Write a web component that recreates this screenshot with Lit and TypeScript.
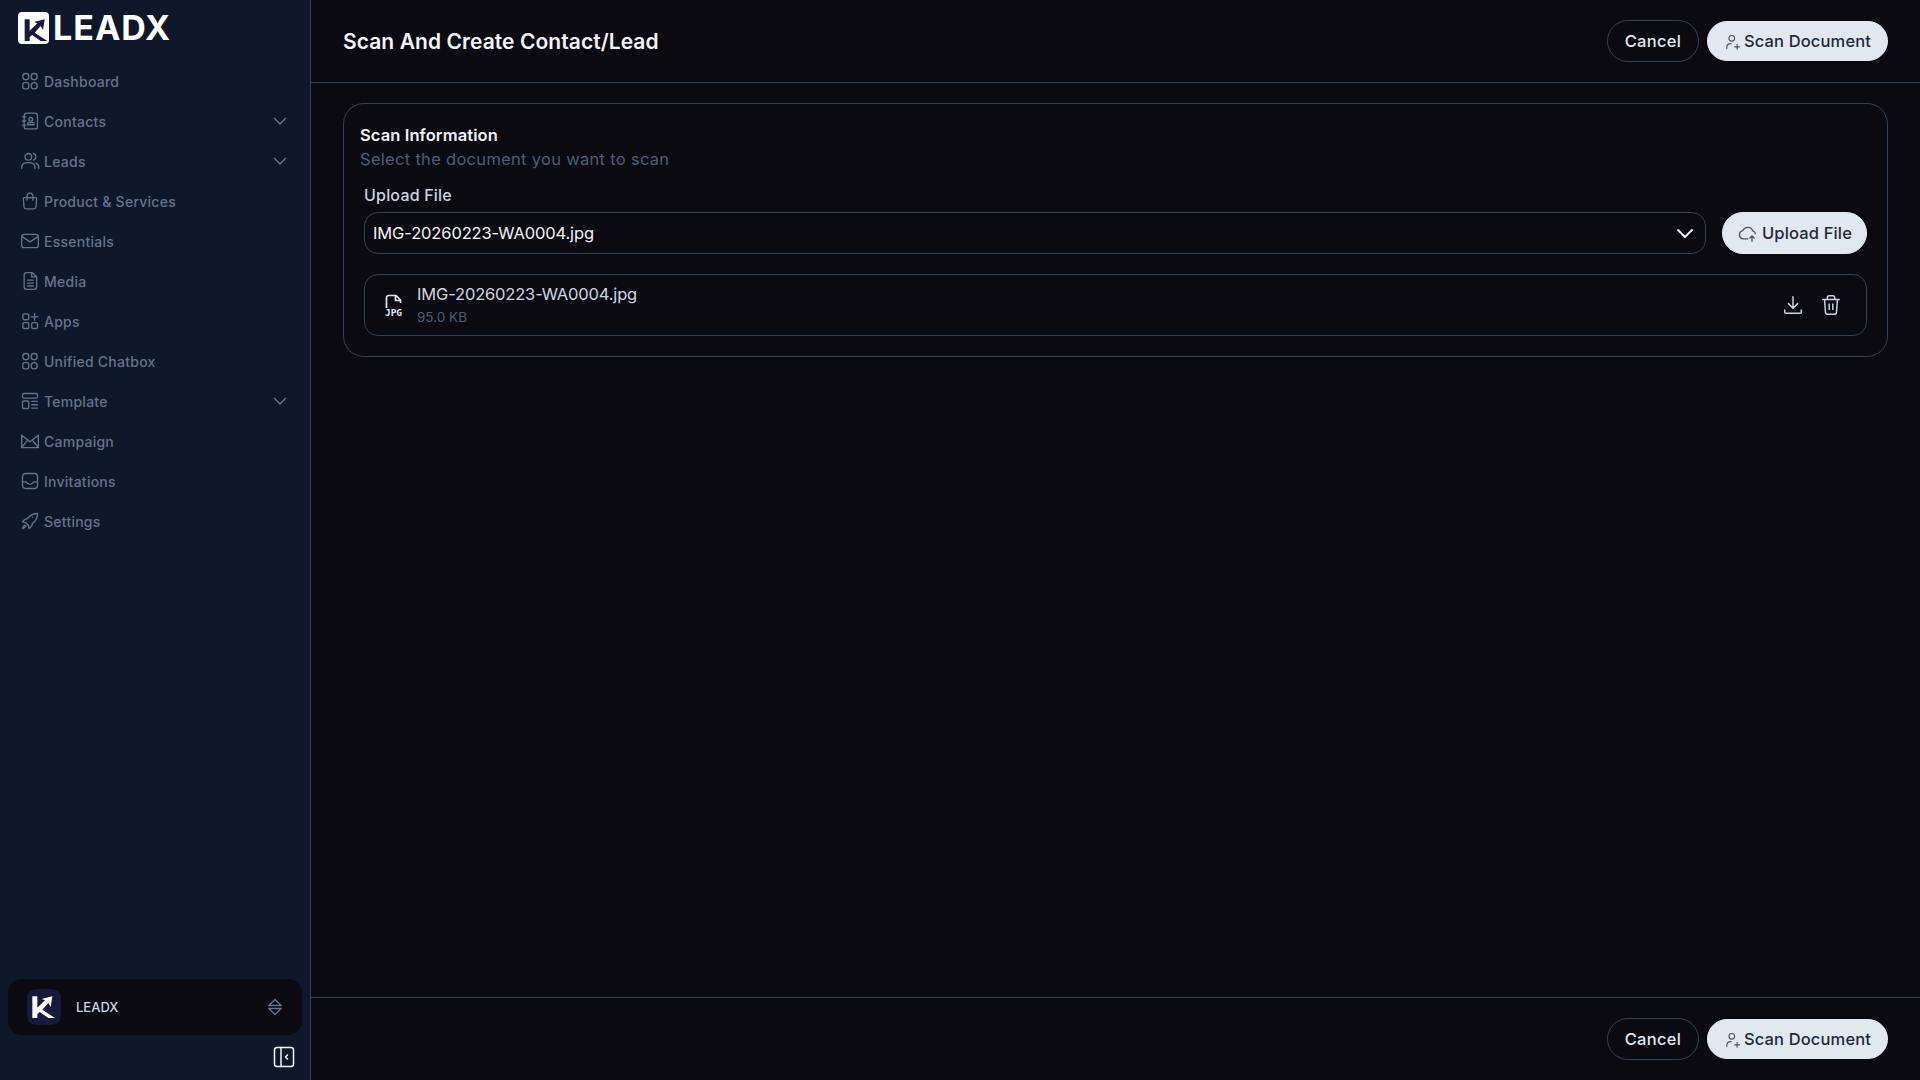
import { LitElement, html, css, svg } from "lit";
import { customElement } from "lit/decorators.js";

const ic = (body: unknown, size = 20, vb = "0 0 24 24") =>
  html`<svg width=${size} height=${size} viewBox=${vb} fill="none" stroke="currentColor" stroke-width="1.6" stroke-linecap="round" stroke-linejoin="round">${body}</svg>`;

const kPath = "M40 38H55V72L78 50L68 46L100 38L95 70L88 58L70 78L108 103H88L62 85L55 92V103H40Z";

const dash = svg`<rect x="3.500" y="3" width="7" height="7.500" rx="3.200"/><rect x="13.500" y="3" width="7" height="7.500" rx="3.200"/><rect x="3.500" y="14" width="7" height="7.500" rx="2"/><rect x="13.500" y="14" width="7" height="7.500" rx="3.200"/>`;
const icons: Record<string, unknown> = {
  dash,
  contacts: svg`<rect x="5" y="2.500" width="16" height="19" rx="3"/><circle cx="13" cy="10" r="2.200"/><path d="M9 16.500h8M9 14.500c1-1 7-1 8 0M3 7h4M3 12h4M3 17h4"/>`,
  leads: svg`<circle cx="10" cy="7" r="4"/><path d="M2 21v-1.500C2 16 5 14 10 14s8 2 8 5.500V21M16 3c2 .5 3 2.200 3 4s-1 3.500-3 4M19 14.500c2 .8 3.500 2.500 3.500 5V21"/>`,
  bag: svg`<path d="M5 8h14a1 1 0 0 1 1 1l-.8 10a3 3 0 0 1-3 2.500H7.800a3 3 0 0 1-3-2.500L4 9a1 1 0 0 1 1-1zM8.500 11V6a3.500 3.500 0 0 1 7 0v5"/>`,
  mail: svg`<rect x="2" y="4" width="20" height="16" rx="3"/><path d="M3 7l9 6 9-6"/>`,
  media: svg`<path d="M5 5a3 3 0 0 1 3-3h7l5 5v12a3 3 0 0 1-3 3H8a3 3 0 0 1-3-3zM9 11h7M9 14.500h7M9 18h7M14 2.500V7h5"/>`,
  apps: svg`<rect x="3.500" y="3.500" width="7" height="7" rx="1.500"/><rect x="3.500" y="14" width="7" height="7" rx="1.500"/><rect x="14" y="14" width="7" height="7" rx="1.500"/><path d="M17.500 3v8M13.500 7h8"/>`,
  template: svg`<rect x="3" y="3" width="18" height="5.500" rx="1.500"/><rect x="3" y="12" width="7.500" height="9" rx="1.500"/><path d="M14 12.500h7M14 16.500h7M14 20.500h7"/>`,
  campaign: svg`<path d="M2 5l10 8 10-8v15H2zM2 20l7-9M22 20l-7-9" stroke-linecap="square"/>`,
  invite: svg`<rect x="3" y="3" width="18" height="18" rx="3.500"/><path d="M3 13h4.500c1 2 2.500 3 4.500 3s3.500-1 4.500-3H21"/>`,
  rocket: svg`<path d="M21 3c-5 0-9 2-12 6l-3 1-3 3 4 1 3 3 1 4 3-3 1-3c4-3 6-7 6-12zM15 7.500h.01M6 17c-1.500.5-2.500 2-3 4 2-.5 3.500-1.500 4-3"/>`,
};

const nav: [string, string, boolean][] = [
  ["Dashboard", "dash", false],
  ["Contacts", "contacts", true],
  ["Leads", "leads", true],
  ["Product & Services", "bag", false],
  ["Essentials", "mail", false],
  ["Media", "media", false],
  ["Apps", "apps", false],
  ["Unified Chatbox", "dash", false],
  ["Template", "template", true],
  ["Campaign", "campaign", false],
  ["Invitations", "invite", false],
  ["Settings", "rocket", false],
];

const chevron = (size = 20) => ic(svg`<path d="M5.500 9l6.500 6.500L18.500 9"/>`, size);
const userPlus = ic(svg`<circle cx="11" cy="7.500" r="4"/><path d="M4 22v-2c0-3 2.500-5 6-5M15 19.500h7M18.500 16v7"/>`, 17);

@customElement("app-root")
export class AppRoot extends LitElement {
  static styles = css`
    :host { display: block; width: 1920px; height: 1080px; font-family: Inter, "Liberation Sans", sans-serif; color: #e2e8f0; background: #0b0a10; }
    * { box-sizing: border-box; }
    .shell { display: flex; height: 100%; }
    .side { width: 311px; flex: none; background: #0f172a; border-right: 1px solid #334155; display: flex; flex-direction: column; padding: 0 8px 12px; }
    .brand { display: flex; align-items: center; gap: 4px; height: 56px; padding: 0 0 1px 10px; color: #fff; }
    .brand svg { flex: none; }
    .brand span { font: 700 34px/1 Inter, sans-serif; letter-spacing: 1px; }
    nav { flex: 1; display: flex; flex-direction: column; padding-top: 5px; }
    .item { height: 40px; display: flex; align-items: center; gap: 4px; padding: 0 12px 0 12px; color: #64748b; font-size: 14px; font-weight: 500; letter-spacing: .25px; }
    .item svg { flex: none; }
    .item .label { flex: 1; }
    .ws { height: 56px; border-radius: 14px; background: #0b0a10; display: flex; align-items: center; padding: 0 20px 0 19px; gap: 15px; color: #cbd5e1; font-size: 13px; font-weight: 500; }
    .ws .label { flex: 1; }
    .ws .sort { color: #64748b; flex: none; }
    .wslogo { width: 34px; height: 36px; border-radius: 9px; background: #171a3a; display: grid; place-items: center; flex: none; }
    .collapse { align-self: flex-end; margin: 11px 7px 0 0; color: #f1f5f9; height: 22px; }
    main { flex: 1; min-width: 0; display: flex; flex-direction: column; }
    header { height: 83px; flex: none; border-bottom: 1px solid #334155; display: flex; align-items: center; padding: 0 32px; }
    header h1 { flex: 1; margin: 0; font-size: 21px; font-weight: 600; letter-spacing: .07px; color: #f1f5f9; }
    .content { flex: 1; padding: 20px 32px; }
    footer { height: 83px; flex: none; border-top: 1px solid #334155; display: flex; align-items: center; justify-content: flex-end; padding: 0 32px; }
    .btns { display: flex; gap: 8px; align-items: center; }
    .btn { height: 42px; width: 92px; border-radius: 21px; display: inline-flex; align-items: center; justify-content: center; font-size: 16.500px; font-weight: 500; letter-spacing: .3px; border: 1px solid #334155; color: #e2e8f0; }
    .btn.primary { background: #e2e8f0; border-color: #e2e8f0; color: #1e293b; gap: 3px; height: 40px; width: 181px; letter-spacing: .15px; }
    .btn.primary svg { color: #475569; flex: none; }
    .card { border: 1px solid #334155; border-radius: 21px; padding: 20px 16px; height: 254px; }
    .title { font-size: 16.500px; font-weight: 600; line-height: 22px; letter-spacing: .1px; color: #f1f5f9; }
    .sub { font-size: 16.500px; line-height: 26px; letter-spacing: .3px; color: #4f5d74; }
    .field { padding: 0 4px; }
    .lab { font-size: 16px; font-weight: 500; letter-spacing: .2px; color: #cbd5e1; line-height: 22px; margin-top: 12px; }
    .row { display: flex; gap: 16px; margin-top: 6px; }
    .select { flex: 1; height: 42px; border: 1px solid #334155; border-radius: 14px; display: flex; align-items: center; justify-content: space-between; padding: 0 8px 0 8px; font-size: 16.500px; letter-spacing: -.13px; color: #f1f5f9; }
    .btn.up { width: 145px; height: 42px; gap: 5px; }
    .file { margin-top: 20px; height: 62px; border: 1px solid #334155; border-radius: 14px; display: flex; align-items: center; padding: 0 24px 0 20px; gap: 15px; }
    .file .info { flex: 1; padding-bottom: 2px; }
    .fname { font-size: 16.500px; line-height: 22px; letter-spacing: -.17px; color: #cbd5e1; }
    .fsize { font-size: 13.500px; line-height: 18px; color: #4f5d74; margin-top: 3px; }
    .acts { display: flex; gap: 16px; color: #cbd5e1; }
    .jpg { width: 17px; height: 22px; display: flex; flex-direction: column; align-items: center; flex: none; }
    .jpg svg { flex: none; }
    .jpgt { font: 700 9.500px/9px "DejaVu Sans Mono", monospace; color: #e2e8f0; }
  `;

  actions() {
    return html`<div class="btns">
      <div class="btn">Cancel</div>
      <div class="btn primary">${userPlus}Scan Document</div>
    </div>`;
  }

  render() {
    return html`<div class="shell">
      <aside class="side">
        <div class="brand">
          <svg width="31" height="32" viewBox="22 20 93 96"><rect x="22" y="20" width="93" height="96" rx="12" fill="#fff"/><path d=${kPath} fill="#171a3a" transform="translate(2 4)"/></svg>
          <span>LEADX</span>
        </div>
        <nav>
          ${nav.map(([t, i, c]) => html`<div class="item">${ic(icons[i], 20)}<span class="label">${t}</span>${c ? chevron(20) : ""}</div>`)}
        </nav>
        <div class="ws">
          <div class="wslogo"><svg width="34" height="36" viewBox="24 16 102 108"><path d=${kPath} fill="#fff"/></svg></div>
          <span class="label">LEADX</span>
          <svg class="sort" width="14" height="18" viewBox="0 0 14 18" fill="none" stroke="currentColor" stroke-width="1.300"><path d="M1 7.500h12L7 1.500zM1 10.500h12L7 16.500z"/></svg>
        </div>
        <div class="collapse">
          <svg width="22" height="22" viewBox="0 0 22 22" fill="none" stroke="currentColor" stroke-width="1.500" stroke-linejoin="round" stroke-linecap="round"><rect x="1.500" y="1.500" width="19" height="19" rx="2.500"/><path d="M8 1.500v19M14.500 9l-2 2 2 2"/></svg>
        </div>
      </aside>
      <main>
        <header><h1>Scan And Create Contact/Lead</h1>${this.actions()}</header>
        <div class="content">
          <section class="card">
            <div class="title">Scan Information</div>
            <div class="sub">Select the document you want to scan</div>
            <div class="field">
              <div class="lab">Upload File</div>
              <div class="row">
                <div class="select"><span>IMG-20260223-WA0004.jpg</span>${ic(svg`<path d="M5 9l7 7 7-7" stroke-width="1.900"/>`, 24)}</div>
                <div class="btn primary up">${ic(svg`<path d="M13 19H8a5 5 0 0 1-1-9.900A6.500 6.500 0 0 1 19 9.500a4 4 0 0 1 3 3.500M18 22v-6M15.500 18l2.500-2.500 2.500 2.500"/>`, 20)}Upload File</div>
              </div>
              <div class="file">
                <div class="jpg">
                  <svg width="17" height="14" viewBox="0 0 17 14" fill="none" stroke="#e2e8f0" stroke-width="1.700" stroke-linejoin="round"><path d="M1.500 14V3.500a2 2 0 0 1 2-2H11l4.500 4.500V9M10.500 1.500V6.500h5"/></svg>
                  <span class="jpgt">JPG</span>
                </div>
                <div class="info">
                  <div class="fname">IMG-20260223-WA0004.jpg</div>
                  <div class="fsize">95.0 KB</div>
                </div>
                <div class="acts">
                  ${ic(svg`<path d="M12 3v12M7 10.500l5 5 5-5M3 17.500V20a1 1 0 0 0 1 1h16a1 1 0 0 0 1-1v-2.500"/>`, 22)}
                  ${ic(svg`<path d="M3 6h18M8 6V4a2 2 0 0 1 2-2h4a2 2 0 0 1 2 2v2M5 6l1 14a2 2 0 0 0 2 2h8a2 2 0 0 0 2-2l1-14M10 11v6M14 11v6"/>`, 22)}
                </div>
              </div>
            </div>
          </section>
        </div>
        <footer>${this.actions()}</footer>
      </main>
    </div>`;
  }
}
